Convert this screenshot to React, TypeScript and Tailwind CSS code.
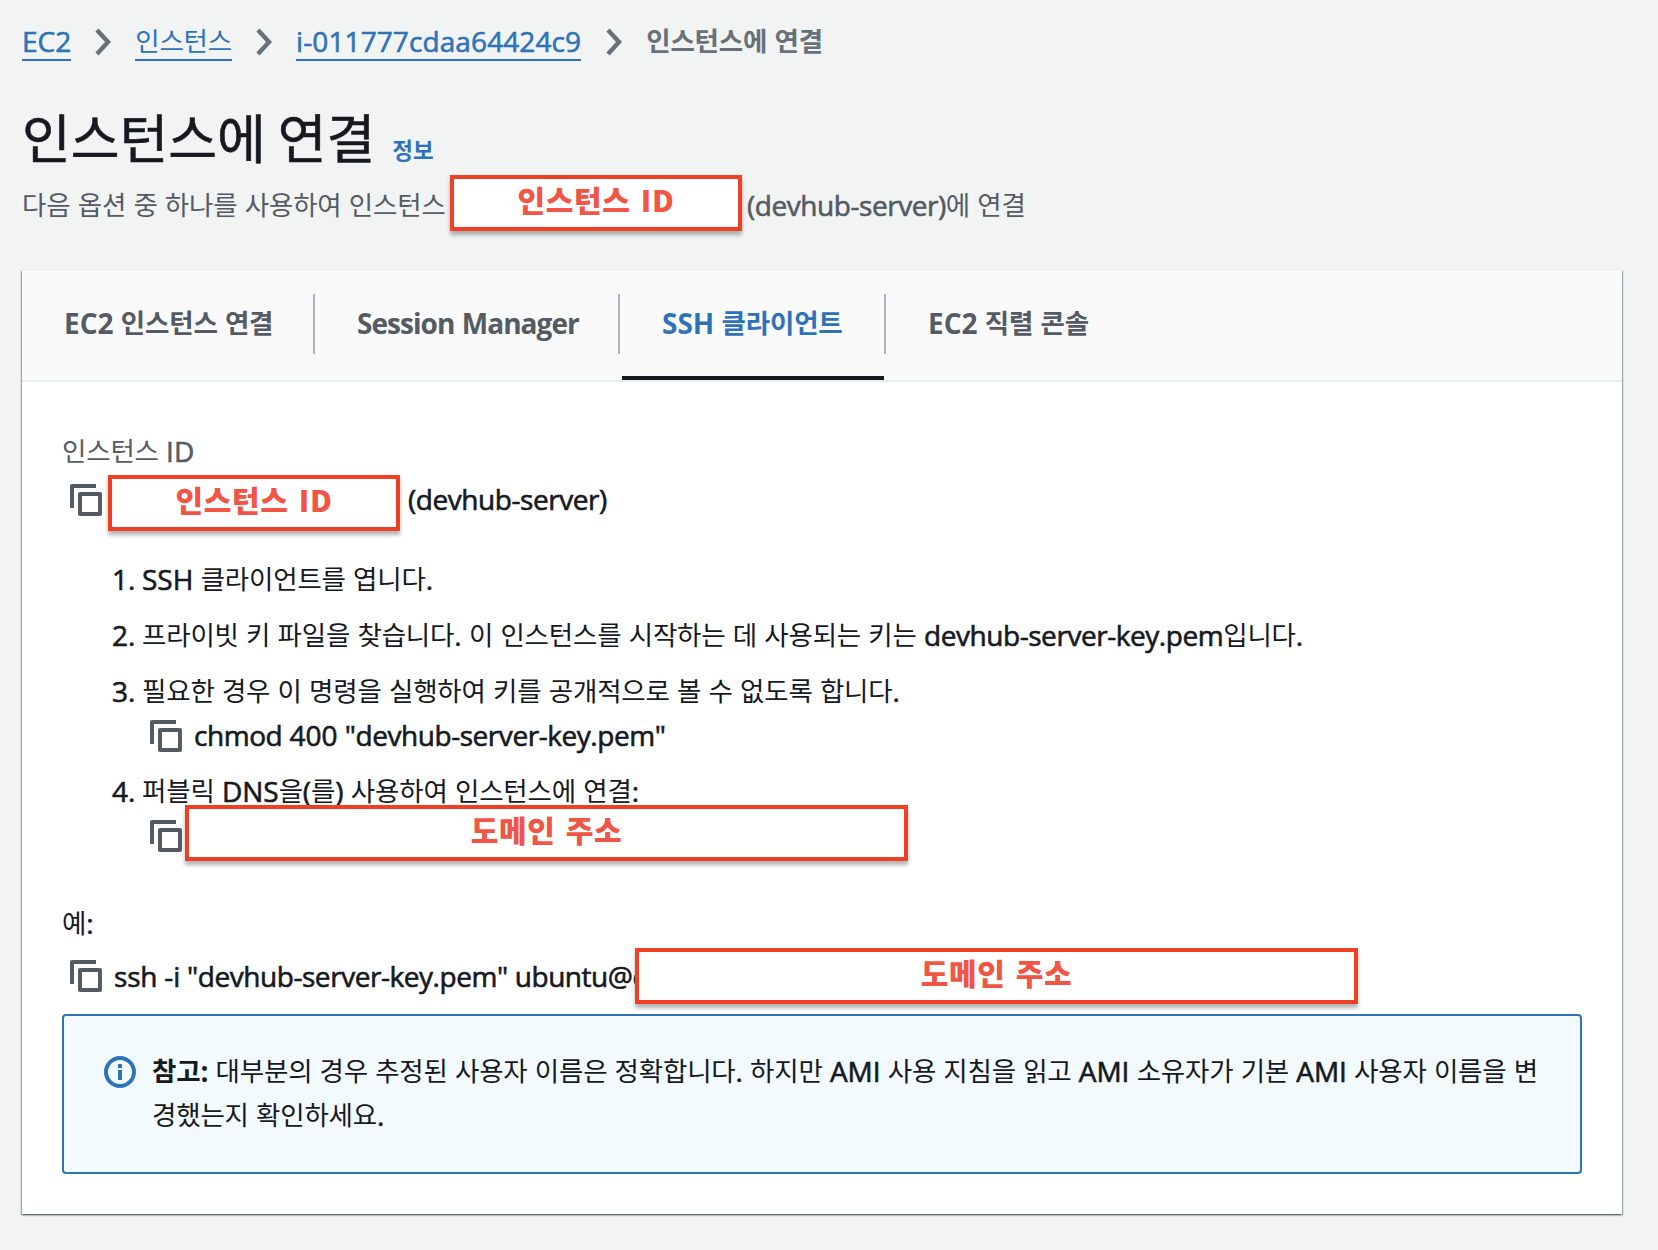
import type { ReactNode } from "react";

// Hangul and latin glyphs come from different families and need their own size
function Text({ children, bold = false }: { children: string; bold?: boolean }) {
  const parts = children
    .split(/([\uac00-\ud7a3]+|[^\s\uac00-\ud7a3]*[a-z]{5,}[^\s\uac00-\ud7a3]*)/)
    .filter(Boolean);
  return (
    <span className={bold ? "font-bold" : ""}>
      {parts.map((part, i) => {
        if (/[\uac00-\ud7a3]/.test(part)) {
          return (
            <span
              key={i}
              className="align-[1px] font-['Noto_Sans_CJK_KR',sans-serif] text-[26.5px] leading-none tracking-[-0.18px]"
            >
              {part}
            </span>
          );
        }
        const word = /[a-z]{5,}/.test(part);
        const tracking = bold ? "tracking-[-0.95px]" : "tracking-[-0.45px]";
        return (
          <span
            key={i}
            className={`${bold ? "" : "[-webkit-text-stroke:0.6px_currentColor]"} ${word ? tracking : ""}`}
          >
            {part}
          </span>
        );
      })}
    </span>
  );
}

function Chevron() {
  return (
    <svg width="16" height="28" viewBox="0 0 16 28" fill="none">
      <path d="M2 2L13 14L2 26" stroke="#687078" strokeWidth="4.4" />
    </svg>
  );
}

function CopyIcon() {
  return (
    <svg
      width="32"
      height="32"
      viewBox="0 0 32 32"
      fill="none"
      stroke="#545b64"
      strokeWidth="4"
      strokeLinejoin="round"
      className="shrink-0"
    >
      <path d="M2 24V2H26" />
      <path d="M10 10H30V30H10Z" />
    </svg>
  );
}

function InfoIcon() {
  return (
    <svg width="32" height="32" viewBox="0 0 32 32" className="shrink-0">
      <circle cx="16" cy="16" r="14" fill="none" stroke="#2e73b8" strokeWidth="4" />
      <path d="M14 8h4v4h-4zM14 14h4v10h-4z" fill="#2e73b8" />
    </svg>
  );
}

function Mask({ children, className }: { children: ReactNode; className: string }) {
  return (
    <div
      className={`flex h-14 shrink-0 justify-center border-4 border-[#ee4023] bg-white font-['Noto_Sans_CJK_KR',sans-serif] text-[30px] leading-[41px] font-black tracking-[0.6px] text-[#f05545] [word-spacing:3px] shadow-[0_4px_4px_rgba(0,0,0,0.3)] ${className}`}
    >
      {children}
    </div>
  );
}

function Crumb({ children }: { children: string }) {
  return (
    <a className="h-[38px] border-b-2 border-[#2e73b8] text-[#2e73b8]">
      <Text>{children}</Text>
    </a>
  );
}

const tabs = [
  { label: "EC2 인스턴스 연결", width: "w-[293px]" },
  { label: "Session Manager", width: "w-[305px]" },
  { label: "SSH 클라이언트", width: "w-[266px]", active: true },
  { label: "EC2 직렬 콘솔", width: "w-[240px]" },
];

export default function App() {
  return (
    <div className="h-[1250px] w-[1658px] overflow-hidden bg-[#f2f3f3] pl-[22px] font-['Open_Sans','Noto_Sans_CJK_KR',sans-serif] text-[28px] leading-[44px] whitespace-nowrap text-[#16191f]">
      <nav className="flex h-[61px] pt-[23px] leading-[36px]">
        <Crumb>EC2</Crumb>
        <div className="flex w-16 justify-center pt-[5px]"><Chevron /></div>
        <Crumb>인스턴스</Crumb>
        <div className="flex w-16 justify-center pt-[5px]"><Chevron /></div>
        <span className="flex tracking-[0.1px]"><Crumb>i-011777cdaa64424c9</Crumb></span>
        <div className="flex w-[65px] justify-center pt-[5px]"><Chevron /></div>
        <span className="text-[#687078]"><Text bold>인스턴스에 연결</Text></span>
      </nav>

      <header className="h-[209px] pt-[39px]">
        <div className="flex h-[75px] items-baseline font-['Noto_Sans_CJK_KR',sans-serif]">
          <h1 className="text-[53px] leading-[73px] [-webkit-text-stroke:0.6px_currentColor]">인스턴스에 연결</h1>
          <a className="ml-[17px] text-[22.5px] font-bold text-[#2e73b8]">정보</a>
        </div>
        <div className="flex h-14 items-center text-[#545b64]">
          <span className="w-[428px] pt-1"><Text>다음 옵션 중 하나를 사용하여 인스턴스</Text></span>
          <Mask className="w-[292px]">인스턴스 ID</Mask>
          <span className="ml-[5px] pt-1"><Text>(devhub-server)에 연결</Text></span>
        </div>
      </header>

      <main className="h-[944px] w-[1600px] bg-white shadow-[0_1px_2px_rgba(0,28,36,0.6),1px_1px_1px_rgba(0,28,36,0.2),-1px_1px_1px_rgba(0,28,36,0.2)]">
        <div className="flex h-28 border-b-2 border-[#eaeded] bg-[#fafafa]">
          {tabs.map((tab, i) => (
            <div key={tab.label} className={`flex h-[110px] ${tab.width}`}>
              <div className={`flex-1 ${tab.active ? "ml-0.5 border-b-4 border-[#16191f] pl-10 text-[#2e73b8]" : "pl-[42px] text-[#545b64]"}`}>
                <div className="h-[106px] leading-[106px]"><Text bold>{tab.label}</Text></div>
              </div>
              {i < tabs.length - 1 && <div className="mt-6 h-[60px] w-0.5 bg-[#aab7b8]" />}
            </div>
          ))}
        </div>

        <div className="px-10 pt-[47px]">
          <div className="h-11 text-[#545b64]"><Text>인스턴스 ID</Text></div>
          <div className="mt-0.5 flex h-14 items-start pl-2">
            <div className="pt-[9px]"><CopyIcon /></div>
            <Mask className="ml-1.5 w-[292px]">인스턴스 ID</Mask>
            <span className="ml-2 pt-0.5"><Text>(devhub-server)</Text></span>
          </div>

          <ol className="mt-[26px] ml-[50px]">
            <li className="mb-3 flex h-11">
              <span className="w-[30px]"><Text>1.</Text></span>
              <Text>SSH 클라이언트를 엽니다.</Text>
            </li>
            <li className="mb-3 flex h-11">
              <span className="w-[30px]"><Text>2.</Text></span>
              <Text>프라이빗 키 파일을 찾습니다. 이 인스턴스를 시작하는 데 사용되는 키는 devhub-server-key.pem입니다.</Text>
            </li>
            <li className="mb-3">
              <div className="flex h-11">
                <span className="w-[30px]"><Text>3.</Text></span>
                <Text>필요한 경우 이 명령을 실행하여 키를 공개적으로 볼 수 없도록 합니다.</Text>
              </div>
              <div className="flex h-11 items-center gap-3 pl-[38px]">
                <div className="pt-0.5"><CopyIcon /></div>
                <Text>chmod 400 "devhub-server-key.pem"</Text>
              </div>
            </li>
            <li>
              <div className="flex h-9">
                <span className="w-[30px]"><Text>4.</Text></span>
                <Text>퍼블릭 DNS을(를) 사용하여 인스턴스에 연결:</Text>
              </div>
              <div className="relative flex h-14 pl-[38px]">
                <div className="pt-[15px]"><CopyIcon /></div>
                <Mask className="ml-[3px] w-[723px]">도메인 주소</Mask>
              </div>
            </li>
          </ol>

          <div className="mt-10 h-11"><Text>예:</Text></div>
          <div className="mt-[3px] mb-2.5 flex h-14 items-center pl-2">
            <CopyIcon />
            <span className="ml-3 w-[521px] tracking-[-0.2px]"><Text>ssh -i "devhub-server-key.pem" ubuntu@e</Text></span>
            <Mask className="relative w-[723px]">도메인 주소</Mask>
          </div>

          <div className="flex h-40 w-[1520px] gap-4 rounded-[4px] border-2 border-[#2e73b8] bg-[#f2fafd] py-[33px] pl-10">
            <div className="pt-[7px]"><InfoIcon /></div>
            <div className="[word-spacing:-0.1px]">
              <div className="h-11"><Text bold>참고:</Text><Text> 대부분의 경우 추정된 사용자 이름은 정확합니다. 하지만 AMI 사용 지침을 읽고 AMI 소유자가 기본 AMI 사용자 이름을 변</Text></div>
              <div><Text>경했는지 확인하세요.</Text></div>
            </div>
          </div>
        </div>
      </main>
    </div>
  );
}
